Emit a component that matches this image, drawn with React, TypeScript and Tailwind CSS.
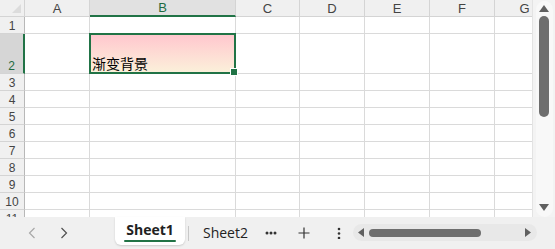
import React from "react";

const colW = [65, 146, 64, 65, 65, 65, 60];
const colNames = ["A", "B", "C", "D", "E", "F", "G"];
const rows: { n: number; h: number }[] = [
  { n: 1, h: 17 },
  { n: 2, h: 40 },
  { n: 3, h: 17 },
  { n: 4, h: 17 },
  { n: 5, h: 17 },
  { n: 6, h: 17 },
  { n: 7, h: 17 },
  { n: 8, h: 17 },
  { n: 9, h: 17 },
  { n: 10, h: 17 },
  { n: 11, h: 17 },
];

export default function App() {
  return (
    <div
      className="w-[555px] h-[249px] bg-[#f3f3f3] overflow-hidden flex flex-col"
      style={{ fontFamily: '"Liberation Sans", Arial, "Noto Sans CJK SC", sans-serif' }}
    >
      <div className="flex h-[217px]">
        {/* grid */}
        <div className="w-[533px] h-[217px] overflow-hidden bg-white border-r border-[#e3e3e3] flex flex-col">
          {/* header row */}
          <div className="flex h-[17px] shrink-0">
            <div className="w-[25px] shrink-0 h-[17px] bg-[#f0f0f0] border-r border-b border-[#d4d4d4] relative">
              <svg className="absolute right-[3px] bottom-[3px]" width="9" height="9" viewBox="0 0 9 9">
                <polygon points="9,0 9,9 0,9" fill="#dcdcdc" />
              </svg>
            </div>
            {colNames.map((c, i) => (
              <div
                key={c}
                style={{ width: colW[i] }}
                className={
                  "shrink-0 h-[17px] flex items-center justify-center text-[13px] leading-none border-r " +
                  (c === "B"
                    ? "bg-[#e1e1e1] text-[#1e6b41] border-r-[#d4d4d4] border-b-2 border-b-[#217346]"
                    : "bg-[#f0f0f0] text-[#444] border-[#d4d4d4] border-b")
                }
              >
                {c}
              </div>
            ))}
          </div>
          {rows.map((r) => (
            <div key={r.n} className="flex shrink-0" style={{ height: r.h }}>
              <div
                className={
                  "w-[25px] shrink-0 flex items-end justify-center pb-[1px] text-[12px] leading-none border-b border-[#d4d4d4] " +
                  (r.n === 2
                    ? "bg-[#d6d6d6] text-[#1e6b41] border-r-2 border-r-[#217346]"
                    : "bg-[#f0f0f0] text-[#444] border-r border-r-[#b8b8b8]")
                }
              >
                {r.n}
              </div>
              {colNames.map((c, i) => {
                const sel = r.n === 2 && c === "B";
                return (
                  <div
                    key={c}
                    style={{ width: colW[i] }}
                    className="shrink-0 border-r border-b border-[#dadada] relative"
                  >
                    {sel && (
                      <div className="absolute left-[-1px] top-[-1px] right-[-1px] bottom-[-1px] border-2 border-[#217346] bg-gradient-to-b from-[#ffc7ce] to-[#fbf0da] flex items-end px-[1px] z-10">
                        <span
                          className="text-[14px] leading-[18px] text-black"
                          style={{ fontFamily: '"Noto Sans CJK SC", sans-serif' }}
                        >
                          渐变背景
                        </span>
                        <div className="absolute right-[-4px] bottom-[-4px] w-[6px] h-[6px] bg-[#217346] border border-white box-content" />
                      </div>
                    )}
                  </div>
                );
              })}
            </div>
          ))}
        </div>
        {/* vertical scrollbar */}
        <div className="w-[22px] h-[217px] flex justify-center pt-[1px]">
          <div className="w-[17px] h-[216px] bg-[#f8f8f8] rounded-full flex flex-col items-center">
            <svg className="mt-[4px]" width="10" height="7" viewBox="0 0 10 7">
              <polygon points="5,0 10,7 0,7" fill="#606060" />
            </svg>
            <div className="mt-[4px] w-[10px] h-[101px] rounded-full bg-[#6e6e6e]" />
            <div className="flex-1" />
            <svg className="mb-[6px]" width="10" height="7" viewBox="0 0 10 7">
              <polygon points="0,0 10,0 5,7" fill="#606060" />
            </svg>
          </div>
        </div>
      </div>
      {/* bottom bar */}
      <div className="h-[32px] flex items-start bg-[#f0f0f0]">
        <div className="w-[115px] h-[32px] flex items-center text-[#a0a0a0]">
          <svg className="ml-[28px]" width="8" height="12" viewBox="0 0 8 12">
            <polyline points="6.5,1 1.5,6 6.5,11" fill="none" stroke="#a8a8a8" strokeWidth="1.2" />
          </svg>
          <svg className="ml-[24px]" width="8" height="12" viewBox="0 0 8 12">
            <polyline points="1.5,1 6.5,6 1.5,11" fill="none" stroke="#505050" strokeWidth="1.2" />
          </svg>
        </div>
        <div
          className="w-[70px] h-[28px] bg-white rounded-b-[6px] shadow-[0_1px_2px_rgba(0,0,0,0.15)] flex flex-col items-center pt-[4px]"
          style={{ fontFamily: '"Open Sans", sans-serif' }}
        >
          <span className="text-[14px] font-bold leading-[18px] text-[#222]">Sheet1</span>
          <div className="mt-[1px] w-[52px] h-[2px] bg-[#217346] rounded-full" />
        </div>
        <div className="ml-[3px] mt-[9px] w-[1px] h-[15px] bg-[#c8c8c8]" />
        <div
          className="ml-[14px] h-[32px] flex items-center text-[14px] text-[#222] pb-[1px]"
          style={{ fontFamily: '"Open Sans", sans-serif' }}
        >
          Sheet2
        </div>
        <div className="ml-[17px] h-[32px] flex items-center">
          <svg width="12" height="4" viewBox="0 0 12 4">
            <circle cx="2" cy="2" r="1.5" fill="#333" />
            <circle cx="6" cy="2" r="1.5" fill="#333" />
            <circle cx="10" cy="2" r="1.5" fill="#333" />
          </svg>
        </div>
        <div className="ml-[21px] h-[32px] flex items-center">
          <svg width="12" height="12" viewBox="0 0 12 12">
            <path d="M6 0.5V11.5M0.5 6H11.5" stroke="#333" strokeWidth="1.2" />
          </svg>
        </div>
        <div className="ml-[27px] h-[32px] flex items-center">
          <svg width="4" height="12" viewBox="0 0 4 12">
            <circle cx="2" cy="2" r="1.3" fill="#333" />
            <circle cx="2" cy="6.5" r="1.3" fill="#333" />
            <circle cx="2" cy="11" r="1.3" fill="#333" />
          </svg>
        </div>
        <div className="ml-[12px] mt-[7px] w-[184px] h-[17px] rounded-full bg-[#e8e8e8] flex items-center">
          <svg className="ml-[5px]" width="6" height="9" viewBox="0 0 6 9">
            <polygon points="6,0 6,9 0,4.5" fill="#606060" />
          </svg>
          <div className="ml-[5px] w-[112px] h-[8px] rounded-full bg-[#6e6e6e]" />
          <div className="flex-1" />
          <svg className="mr-[6px]" width="6" height="9" viewBox="0 0 6 9">
            <polygon points="0,0 6,4.5 0,9" fill="#606060" />
          </svg>
        </div>
      </div>
    </div>
  );
}
